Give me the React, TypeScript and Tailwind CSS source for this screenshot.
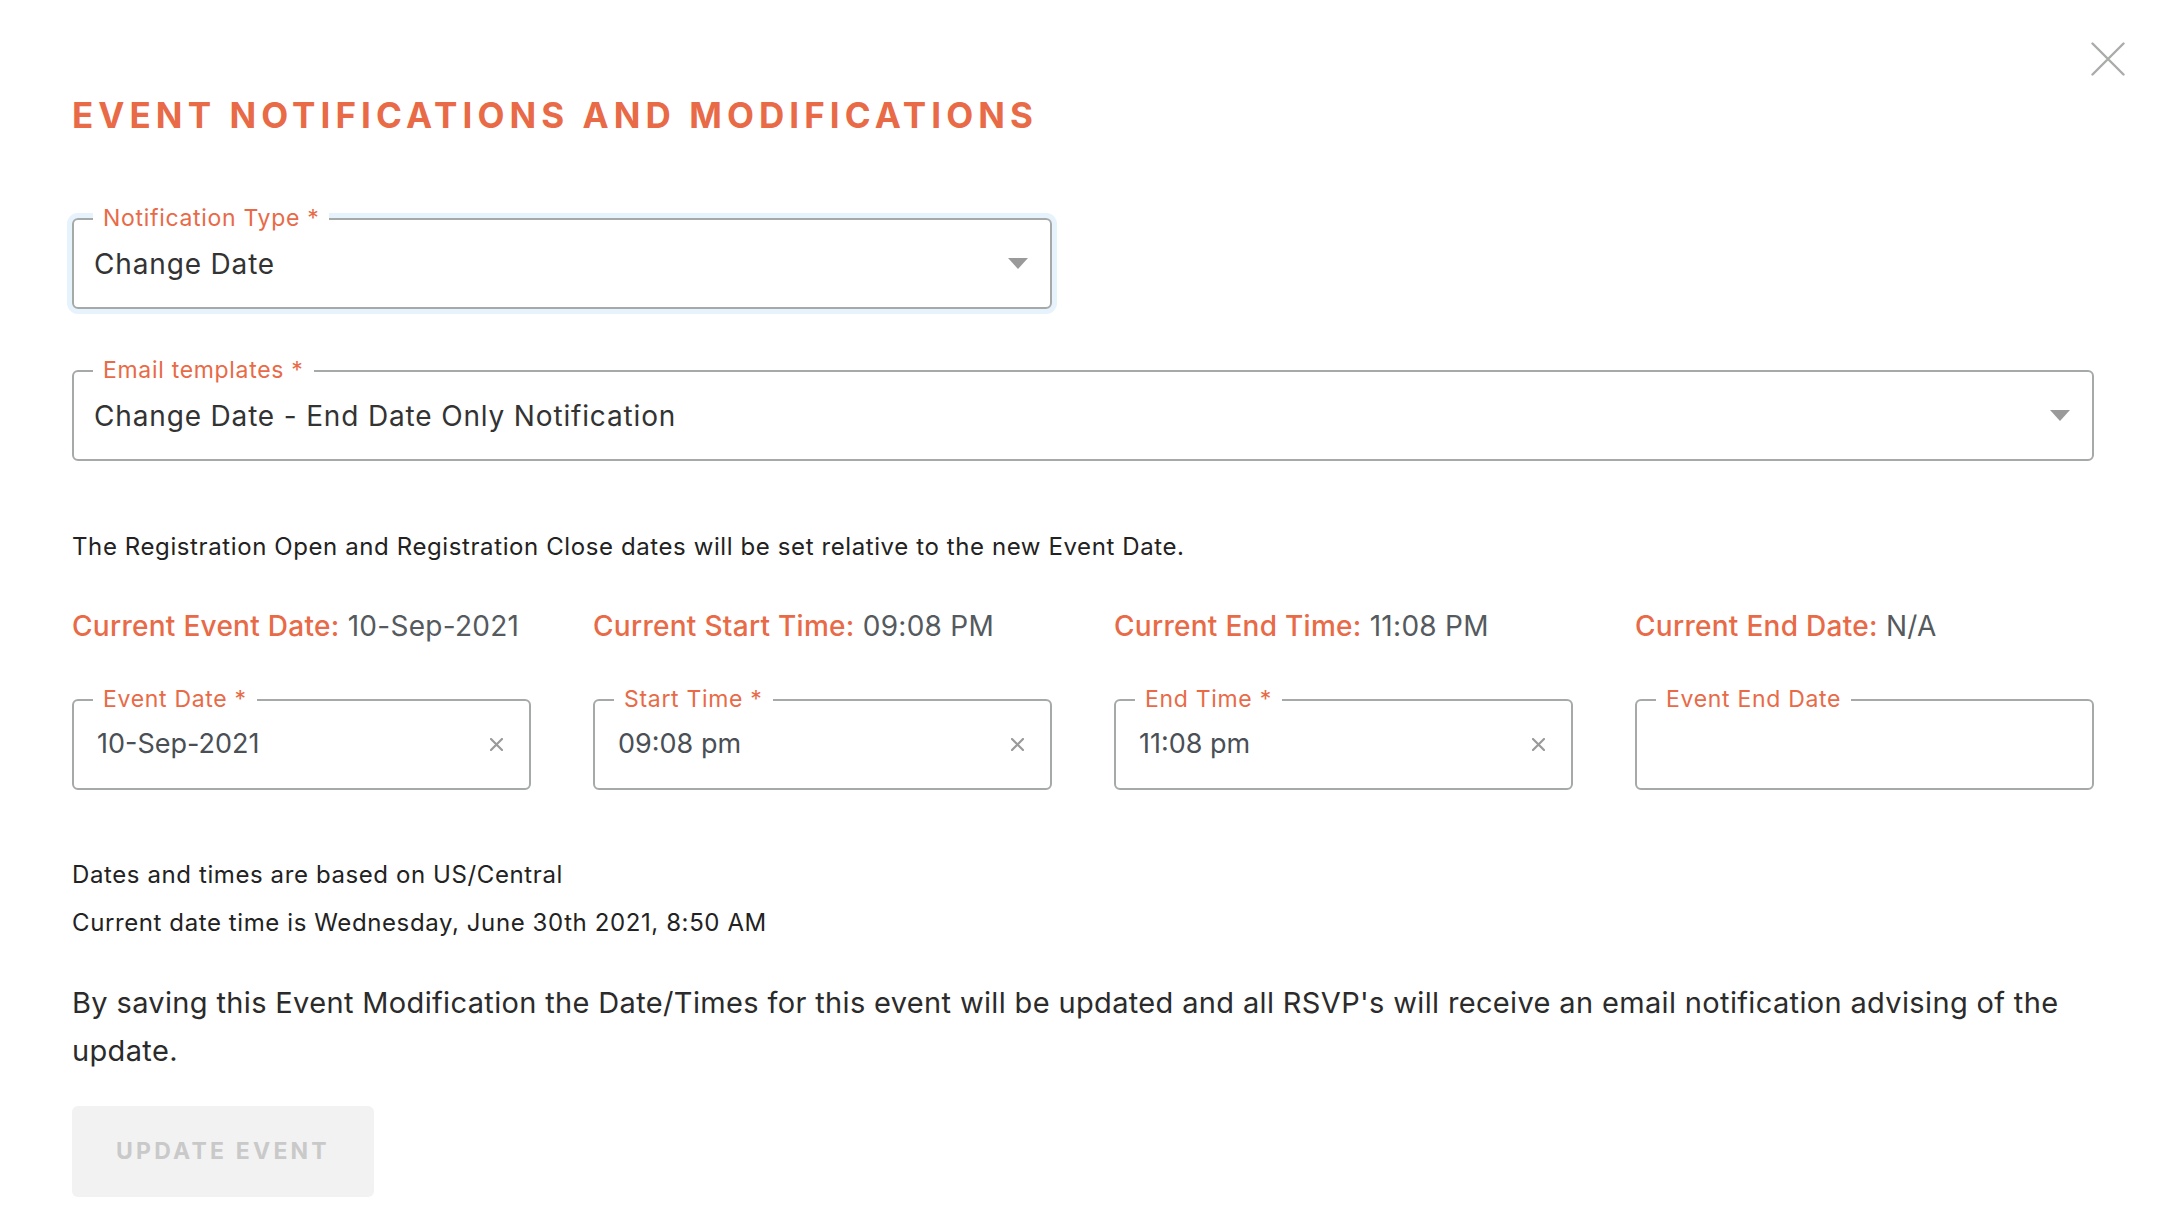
const font = { fontFamily: "Inter, 'Noto Sans', sans-serif" };

const Caret = () => (
  <svg width="20" height="11" viewBox="0 0 20 11" className="shrink-0">
    <path d="M0 0 L20 0 L10 11 Z" fill="#9a9a9a" />
  </svg>
);

const ClearIcon = () => (
  <svg width="13" height="13" viewBox="0 0 13 13" className="shrink-0">
    <path d="M1 1 L12 12 M12 1 L1 12" stroke="#9a9a9a" strokeWidth="2.2" strokeLinecap="round" />
  </svg>
);

const CloseIcon = () => (
  <svg width="34" height="34" viewBox="0 0 34 34">
    <path d="M1.5 1.5 L32.5 32.5 M32.5 1.5 L1.5 32.5" stroke="#a9aca9" strokeWidth="2.4" strokeLinecap="round" />
  </svg>
);

const FieldLabel: React.FC<{ text: string; required?: boolean }> = ({ text, required }) => (
  <span className="absolute -top-[16px] left-[19px] bg-white px-[10px] text-[23px] leading-[28px] tracking-[0.03em] text-[#e86a47]">
    {text}
    {required && " *"}
  </span>
);

const SelectField: React.FC<{
  label: string;
  value: string;
  focused?: boolean;
  className?: string;
}> = ({ label, value, focused, className }) => (
  <div
    className={`relative flex h-[91px] items-center justify-between rounded-[6px] border-2 border-[#a5aaa8] pl-[20px] pr-[22px] ${
      focused ? "ring-[5px] ring-[#e6f2fc]" : ""
    } ${className ?? ""}`}
  >
    <FieldLabel text={label} required />
    <span className="text-[28px] tracking-[0.03em] text-[#333333]">{value}</span>
    <Caret />
  </div>
);

const InputField: React.FC<{ label: string; value?: string; required?: boolean }> = ({
  label,
  value,
  required,
}) => (
  <div className="relative flex h-[91px] items-center justify-between rounded-[6px] border-2 border-[#a5aaa8] pl-[23px] pr-[26px]">
    <FieldLabel text={label} required={required} />
    <span className="text-[27px] text-[#4a4f55]">{value}</span>
    {value && <ClearIcon />}
  </div>
);

const Current: React.FC<{ label: string; value: string }> = ({ label, value }) => (
  <div className="text-[28px] leading-[36px] tracking-[0.01em]">
    <span className="font-medium text-[#e86a47]">{label}</span>{" "}
    <span className="text-[#555a5e]">{value}</span>
  </div>
);

export default function App() {
  return (
    <div className="relative min-h-[1230px] bg-white px-[72px] pt-[95px]" style={font}>
      <button className="absolute right-[41px] top-[42px]">
        <CloseIcon />
      </button>

      <h1 className="text-[35px] font-bold leading-[40px] tracking-[0.145em] text-[#e86a47]">
        EVENT NOTIFICATIONS AND MODIFICATIONS
      </h1>

      <SelectField label="Notification Type" value="Change Date" focused className="mt-[83px] w-[980px]" />

      <SelectField
        label="Email templates"
        value="Change Date - End Date Only Notification"
        className="mt-[61px]"
      />

      <p className="mt-[71px] text-[24px] leading-[30px] tracking-[0.025em] text-[#222222]">
        The Registration Open and Registration Close dates will be set relative to the new Event Date.
      </p>

      <div className="mt-[46px] grid grid-cols-4 gap-x-[62px]">
        <Current label="Current Event Date:" value="10-Sep-2021" />
        <Current label="Current Start Time:" value="09:08 PM" />
        <Current label="Current End Time:" value="11:08 PM" />
        <Current label="Current End Date:" value="N/A" />
      </div>

      <div className="mt-[55px] grid grid-cols-4 gap-x-[62px]">
        <InputField label="Event Date" value="10-Sep-2021" required />
        <InputField label="Start Time" value="09:08 pm" required />
        <InputField label="End Time" value="11:08 pm" required />
        <InputField label="Event End Date" />
      </div>

      <div className="mt-[61px] text-[24px] leading-[48px] tracking-[0.025em] text-[#222222]">
        <p>Dates and times are based on US/Central</p>
        <p>Current date time is Wednesday, June 30th 2021, 8:50 AM</p>
      </div>

      <p className="mt-[32px] text-[29px] leading-[48px] tracking-[0.012em] text-[#2b2b2b]">
        By saving this Event Modification the Date/Times for this event will be updated and all RSVP's will
        receive an email notification advising of the update.
      </p>

      <button
        disabled
        className="mt-[31px] flex h-[91px] w-[302px] items-center justify-center rounded-[6px] bg-[#f2f2f2] text-[23px] font-bold tracking-[0.14em] text-[#c9c9c9]"
      >
        UPDATE EVENT
      </button>
    </div>
  );
}
